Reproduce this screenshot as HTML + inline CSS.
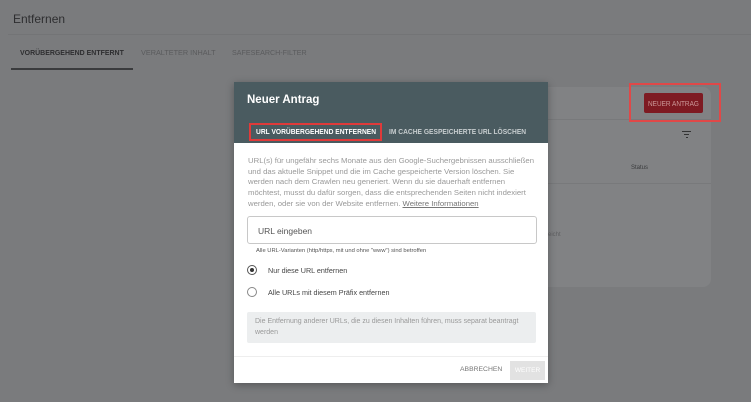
<!DOCTYPE html>
<html><head><style>
*{margin:0;padding:0;box-sizing:border-box}
body{width:751px;height:402px;overflow:hidden;background:#7a7b7d;font-family:"Liberation Sans",sans-serif;position:relative}
.a{position:absolute;white-space:nowrap}
.c{transform-origin:0 0;transform:scaleX(.89)}
</style></head><body>
<div class="a" style="left:13px;top:12px;font-size:12px;color:#2e2e30">Entfernen</div>
<div class="a" style="left:8px;top:34px;width:743px;height:1px;background:#737476"></div>
<div class="a c" style="left:20px;top:48px;font-size:7.5px;color:#2e2e30;font-weight:bold;transform:scaleX(.93)">VORÜBERGEHEND ENTFERNT</div>
<div class="a c" style="left:141px;top:48px;font-size:7.5px;color:#5a5b5d;transform:scaleX(.97)">VERALTETER INHALT</div>
<div class="a c" style="left:232px;top:48px;font-size:7.5px;color:#5a5b5d;transform:scaleX(.95)">SAFESEARCH-FILTER</div>
<div class="a" style="left:11px;top:68px;width:122px;height:2px;background:#3a3b3d"></div>
<!-- card -->
<div class="a" style="left:370px;top:87px;width:341px;height:200px;background:#818284;border-radius:8px"></div>
<div class="a" style="left:370px;top:119px;width:341px;height:1px;background:#78797b"></div>
<div class="a" style="left:370px;top:183px;width:341px;height:1px;background:#78797b"></div>
<div class="a" style="left:631px;top:165px;font-size:6px;color:#3a3b3d">Status</div>
<div class="a" style="left:548px;top:232px;font-size:6px;color:#5e5f61">eicht</div>
<div class="a" style="left:682px;top:131px;width:9px;height:1px;background:#333"></div>
<div class="a" style="left:684px;top:134px;width:5px;height:1px;background:#333"></div>
<div class="a" style="left:686px;top:137px;width:2px;height:1px;background:#333"></div>
<div class="a" style="left:644px;top:93px;width:59px;height:20px;background:#7e1a22;border-radius:2px"></div>
<div class="a c" style="left:648px;top:99px;font-size:7.5px;color:#c99;transform:scaleX(.86)">NEUER ANTRAG</div>
<div class="a" style="left:629px;top:83px;width:92px;height:39px;border:2px solid #e04848"></div>
<!-- dialog -->
<div class="a" style="left:234px;top:82px;width:314px;height:301px;background:#fff;box-shadow:0 2px 8px rgba(0,0,0,.3)"></div>
<div class="a" style="left:234px;top:82px;width:314px;height:61px;background:#4a5b60"></div>
<div class="a" style="left:247px;top:94px;font-size:11.5px;color:#fff;font-weight:bold">Neuer Antrag</div>
<div class="a" style="left:249px;top:123px;width:133px;height:18px;border:2px solid #e03a3a"></div>
<div class="a c" style="left:256px;top:127px;font-size:7.5px;font-weight:bold;color:#fff">URL VORÜBERGEHEND ENTFERNEN</div>
<div class="a c" style="left:389px;top:127px;font-size:7.5px;font-weight:bold;color:#c6ccce">IM CACHE GESPEICHERTE URL LÖSCHEN</div>
<div class="a" style="left:248px;top:156px;font-size:7.75px;line-height:10.7px;color:#999;white-space:normal;width:292px">URL(s) für ungefähr sechs Monate aus den Google-Suchergebnissen ausschließen und das aktuelle Snippet und die im Cache gespeicherte Version löschen. Sie werden nach dem Crawlen neu generiert. Wenn du sie dauerhaft entfernen möchtest, musst du dafür sorgen, dass die entsprechenden Seiten nicht indexiert werden, oder sie von der Website entfernen. <u style="color:#777">Weitere Informationen</u></div>
<div class="a" style="left:247px;top:216px;width:290px;height:28px;border:1px solid #c8c8c8;border-radius:3px;font-size:8.5px;color:#555;padding:9px 0 0 10px">URL eingeben</div>
<div class="a" style="left:256px;top:248px;font-size:5.8px;color:#555">Alle URL-Varianten (http/https, mit und ohne "www") sind betroffen</div>
<div class="a" style="left:247px;top:265px;width:10px;height:10px;border:1px solid #555;border-radius:50%"></div>
<div class="a" style="left:250px;top:268px;width:4px;height:4px;background:#333;border-radius:50%"></div>
<div class="a" style="left:268px;top:266px;font-size:7.2px;color:#444">Nur diese URL entfernen</div>
<div class="a" style="left:247px;top:287px;width:10px;height:10px;border:1px solid #888;border-radius:50%"></div>
<div class="a" style="left:268px;top:288px;font-size:7.2px;color:#444">Alle URLs mit diesem Präfix entfernen</div>
<div class="a" style="left:247px;top:312px;width:289px;height:31px;background:#eceeef;border-radius:2px;font-size:7px;line-height:10.5px;color:#999;padding:5px 8px;white-space:normal">Die Entfernung anderer URLs, die zu diesen Inhalten führen, muss separat beantragt werden</div>
<div class="a" style="left:234px;top:356px;width:314px;height:1px;background:#eee"></div>
<div class="a" style="left:460px;top:366px;font-size:6.8px;color:#777">ABBRECHEN</div>
<div class="a" style="left:510px;top:361px;width:35px;height:19px;background:#e2e2e2;font-size:6.5px;color:#fff;text-align:center;line-height:19px">WEITER</div>
</body></html>
